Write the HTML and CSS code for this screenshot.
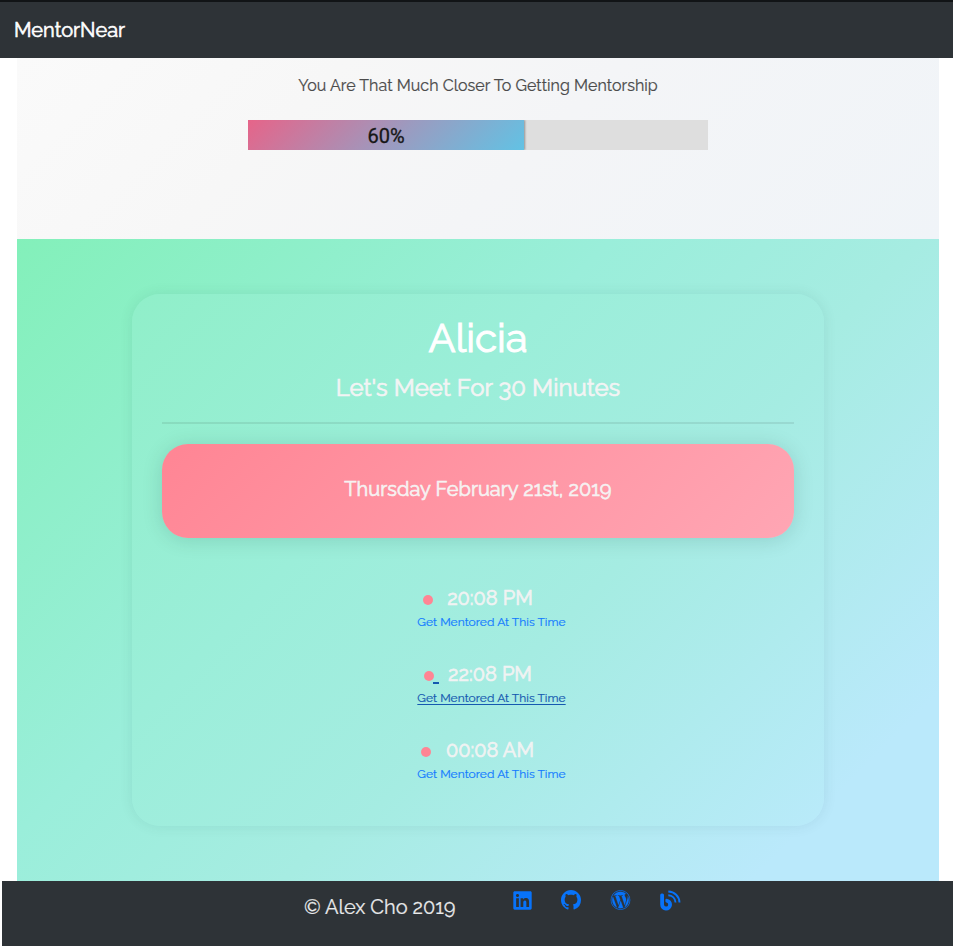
FILE: index.html
```html
<!DOCTYPE html>
<html lang="en">
<head>
<meta charset="utf-8">
<title>MentorNear</title>
<link rel="stylesheet" href="styles.css">
</head>
<body>
<nav class="navbar"><span class="brand">MentorNear</span></nav>
<main class="content">
  <section class="status">
    <p class="status-text">You Are That Much Closer To Getting Mentorship</p>
    <div class="progress"><div class="progress-fill">60%</div></div>
  </section>
  <section class="booking">
    <div class="card">
      <h1>Alicia</h1>
      <h2>Let's Meet For 30 Minutes</h2>
      <hr>
      <div class="date">Thursday February 21st, 2019</div>
      <ul class="slots">
        <li class="slot"><div class="time"><i class="dot"></i><span>20:08 PM</span></div><a class="book">Get Mentored At This Time</a></li>
        <li class="slot active"><div class="time"><i class="dot"></i><span>22:08 PM</span></div><a class="book">Get Mentored At This Time</a></li>
        <li class="slot"><div class="time third"><i class="dot"></i><span>00:08 AM</span></div><a class="book">Get Mentored At This Time</a></li>
      </ul>
    </div>
  </section>
</main>
<footer class="footer">
  <span class="copyright">© Alex Cho 2019</span>
  <div class="social">
    <svg width="19" height="21" viewBox="0 0 448 512"><path d="M416 32H31.900C14.300 32 0 46.500 0 64.300v383.400C0 465.500 14.300 480 31.900 480H416c17.600 0 32-14.500 32-32.300V64.300c0-17.800-14.400-32.300-32-32.300zM135.400 416H69V202.200h66.500V416zm-33.200-243c-21.300 0-38.500-17.300-38.500-38.500S80.900 96 102.200 96c21.200 0 38.500 17.300 38.500 38.500 0 21.300-17.200 38.500-38.500 38.500zm282.100 243h-66.400V312c0-24.800-.5-56.700-34.500-56.700-34.600 0-39.900 27-39.900 54.900V416h-66.400V202.200h63.700v29.200h.9c8.900-16.800 30.600-34.500 62.900-34.500 67.200 0 79.700 44.300 79.700 101.900V416z"/></svg>
    <svg width="20" height="20" viewBox="0 0 16 16"><path d="M8 0C3.580 0 0 3.580 0 8c0 3.540 2.290 6.530 5.470 7.590.4.070.55-.17.55-.38 0-.19-.01-.82-.01-1.490-2.010.37-2.530-.49-2.690-.94-.09-.23-.48-.94-.82-1.130-.28-.15-.68-.52-.01-.53.63-.01 1.080.58 1.230.82.72 1.210 1.870.87 2.330.66.07-.52.28-.87.51-1.070-1.780-.2-3.640-.89-3.640-3.950 0-.87.31-1.590.82-2.150-.08-.2-.36-1.020.08-2.120 0 0 .67-.21 2.200.82.64-.18 1.320-.27 2-.27s1.360.09 2 .27c1.530-1.040 2.200-.82 2.200-.82.44 1.100.16 1.920.08 2.120.51.56.82 1.270.82 2.150 0 3.070-1.870 3.750-3.650 3.950.29.25.54.73.54 1.480 0 1.070-.01 1.930-.01 2.200 0 .21.15.46.55.38A8.010 8.010 0 0 0 16 8c0-4.420-3.580-8-8-8z"/></svg>
    <svg class="wordpress" width="21" height="20" viewBox="0 0 512 512"><path d="M61.700 169.400l101.500 278C92.200 413 43.300 340.200 43.300 256c0-30.900 6.600-60.100 18.400-86.600zm337.900 75.900c0-26.300-9.400-44.500-17.500-58.700-10.800-17.500-20.900-32.400-20.900-49.900 0-19.600 14.800-37.800 35.700-37.800.9 0 1.800.1 2.800.2-37.900-34.700-88.300-55.900-143.700-55.900-74.300 0-139.700 38.100-177.800 95.900 5 .2 9.700.3 13.700.3 22.200 0 56.700-2.700 56.700-2.700 11.500-.7 12.800 16.200 1.400 17.500 0 0-11.500 1.300-24.300 2l77.500 230.400L249.800 247l-33.100-90.800c-11.500-.7-22.300-2-22.300-2-11.500-.7-10.100-18.200 1.300-17.500 0 0 35.100 2.700 56 2.700 22.200 0 56.700-2.700 56.700-2.700 11.500-.7 12.800 16.200 1.400 17.500 0 0-11.500 1.300-24.300 2l76.900 228.700 21.200-70.900c9-29.400 16-50.500 16-68.700zm-139.900 29.300l-63.800 185.500c19.100 5.600 39.200 8.700 60.100 8.700 24.800 0 48.500-4.300 70.600-12.100-.6-.9-1.100-1.900-1.500-2.900l-65.400-179.200zm183-120.700c.9 6.800 1.400 14 1.400 21.900 0 21.600-4 45.800-16.200 76.200l-65 187.900C426.200 403 468.700 334.500 468.700 256c0-37-9.400-71.800-26-102.100zM504 256c0 136.800-111.300 248-248 248C119.200 504 8 392.700 8 256 8 119.200 119.200 8 256 8c136.700 0 248 111.200 248 248zm-11.400 0c0-130.500-106.200-236.600-236.600-236.600C125.500 19.400 19.400 125.500 19.400 256S125.600 492.600 256 492.600c130.500 0 236.600-106.100 236.600-236.600z"/></svg>
    <svg width="21" height="21" viewBox="0 0 21 21"><path d="M.2 5Q.2 3.500 1.700 3.500h.8Q4 3.500 4 5v9.500a2.100 2.100 0 1 0 2.400-2.100q-1-.2-1-1.200V10q0-1.400 1.300-1.300a5.900 5.900 0 1 1-6.500 5.800z"/><path class="wave" d="M8.300 1.500c6.200.2 11 4.800 11.200 11M8.300 5.300c4 .2 7 3.100 7.200 7.200"/></svg>
  </div>
</footer>
</body>
</html>
```
FILE: styles.css
```css
* { box-sizing: border-box; }
body { margin: 0; background: #fff; font-family: Raleway, Lato, sans-serif; }
.navbar { height: 58px; border-top: 2px solid #111416; background: #2e3337; padding-left: 14px; display: flex; align-items: center; }
.brand { color: #fff; font-size: 20px; line-height: 24px; -webkit-text-stroke: .6px; }
.content { margin: 0 14px 0 17px; }
.status { height: 181px; padding-top: 16px; background: linear-gradient(135deg, #fafafa, #f7f7f7 30%, #f4f5f7 55%, #f0f4f8); }
.status-text { margin: 0; height: 24px; line-height: 24px; text-align: center; font-size: 16px; letter-spacing: .04px; color: #4b4b4b; -webkit-text-stroke: .2px; }
.progress { width: 460px; height: 30px; margin: 22px auto 0; overflow: hidden; background: #dedede; }
.progress-fill { width: 60%; height: 30px; text-align: center; font: 400 20px/32px Roboto, sans-serif; color: #161616; -webkit-text-stroke: .3px; background: linear-gradient(135deg, #e66489, #9b9bc0 55%, #62c2e4); box-shadow: 1px 0 2px rgba(0,0,0,.35); }
.booking { height: 642px; padding-top: 55px; background: linear-gradient(135deg, #83f0ba, #9aeeda 38%, #a6ece2 58%, #bae9fb 88%, #bae9fb); }
.card { width: 692px; height: 532px; margin: 0 auto; padding: 20px 30px 0; border-radius: 28px; box-shadow: 0 0 14px rgba(0,70,65,.09); text-align: center; background: linear-gradient(135deg, #90efc9, #9beed9 35%, #a5ece2 62%, #b9eafa); }
h1, h2 { margin: 0; font-weight: 400; }
h1 { height: 48px; line-height: 48px; font-size: 40px; color: #fff; -webkit-text-stroke: 1px; }
h2 { height: 29px; margin-top: 11px; line-height: 29px; font-size: 24px; color: #f3f4f4; -webkit-text-stroke: .7px; }
hr { height: 2px; margin: 20px 0 20px; border: 0; background: rgba(0,0,0,.08); }
.date { height: 94px; padding-top: 33px; border-radius: 26px; line-height: 24px; font-size: 20px; letter-spacing: .04px; color: #f6f2f2; -webkit-text-stroke: .65px; background: linear-gradient(135deg, #ff8594, #ffa6b4); box-shadow: 0 2px 20px rgba(0,55,50,.15); }
.slots { list-style: none; margin: 48px 0 0; padding: 0; }
.slot { height: 76px; }
.time { height: 24px; display: flex; align-items: center; justify-content: center; line-height: 24px; font-size: 20px; color: #f1f3f3; -webkit-text-stroke: .7px; }
.dot { width: 10px; height: 10px; margin: 4px 14px 0 0; border-radius: 50%; background: #ff8594; }
.third { padding-right: 1px; }
.third .dot { margin-right: 15px; }
.book { display: block; margin-left: 27px; height: 24px; line-height: 24px; font-size: 12px; letter-spacing: .04px; color: #147bff; -webkit-text-stroke: .2px; }
.active .book { color: #1559b0; text-decoration: underline; text-underline-offset: 2px; }
.active .dot { position: relative; }
.active .dot::after { content: ""; position: absolute; left: 9px; top: 11px; width: 6px; height: 2px; background: #1559b0; }
.footer { height: 65px; margin-left: 2px; padding-left: 302px; display: flex; background: #2e3337; color: #e9eaeb; }
.copyright { width: 209px; padding-top: 12px; font-size: 20px; line-height: 28px; letter-spacing: -.04px; white-space: nowrap; -webkit-text-stroke: .2px; }
.social { display: flex; gap: 29px; padding-top: 9px; fill: #0873f9; }
.wordpress { stroke: #0873f9; stroke-width: 5; }
.wave { fill: none; stroke: #0873f9; stroke-width: 1.9; }
```
